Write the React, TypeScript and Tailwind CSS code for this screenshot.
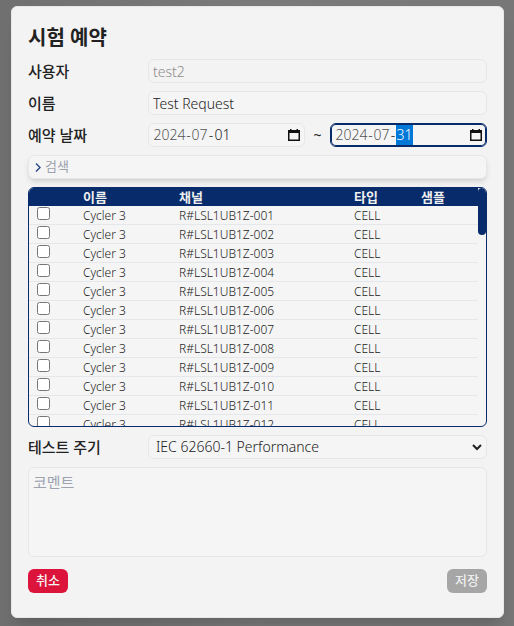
import { useEffect, useRef } from "react";

const channels = Array.from({ length: 12 }, (_, i) => ({
  name: "Cycler 3",
  channel: `R#LSL1UB1Z-${String(i + 1).padStart(3, "0")}`,
  type: "CELL",
  sample: "",
}));

const field = "h-6 min-w-0 rounded-md border border-[#e5e7eb] px-1 text-sm font-light";

function CalendarIcon() {
  return (
    <svg width="12" height="13" viewBox="0 0 12 13" aria-hidden="true">
      <path d="M0 1h12v11H0zM1.5 4v6.500h9V4z" fill="#111" fillRule="evenodd" />
      <path d="M2 0h1.5v2H2zM8.500 0H10v2H8.500z" fill="#111" />
    </svg>
  );
}

function DateField({ label, value, active = false }: { label: string; value: string; active?: boolean }) {
  const day = useRef<HTMLInputElement>(null);
  const [y, m, d] = value.split("-");

  useEffect(() => {
    if (active) {
      day.current?.focus({ preventScroll: true });
      day.current?.select();
    }
  }, [active]);

  const part =
    "h-5 bg-transparent p-0 text-center outline-none selection:bg-[#0078d7] selection:text-white focus:bg-[#0078d7] focus:text-white";

  return (
    <div
      role="group"
      aria-label={label}
      className={`${field} flex flex-1 items-center bg-[#f5f5f5] focus-within:border-[#082c6b] focus-within:ring-1 focus-within:ring-[#082c6b] focus-within:ring-inset`}
    >
      <input aria-label="년" defaultValue={y} className={`${part} w-[33px] text-[#555555]`} />
      <span className="w-[5px] text-center text-[#444444]">-</span>
      <input aria-label="월" defaultValue={m} className={`${part} w-[17px] text-[#555555]`} />
      <span className="w-[6px] text-center text-[#222222]">-</span>
      <input ref={day} aria-label="일" defaultValue={d} className={`${part} w-[17px] text-[#222222]`} />
      <button type="button" aria-label="달력 열기" className="ml-auto">
        <CalendarIcon />
      </button>
    </div>
  );
}

export default function App() {
  const label = "w-[120px] shrink-0 text-[15px] font-medium";
  const cell = "border-b border-[#e5e7eb] p-0";
  const textCell = `${cell} pt-[2px] leading-4`;
  return (
    <div className="min-h-screen bg-linear-to-r from-[#707070] via-[#7a7a7a] to-[#777777] pt-[6px] pr-[10px] pb-2 pl-[11px] font-['Noto_Sans','Noto_Sans_CJK_KR',sans-serif] text-[#222222]">
      <form
        role="dialog"
        aria-labelledby="title"
        className="flex flex-col gap-2 rounded-md border border-[#e5e7eb] bg-[#f3f3f3] px-4 pt-4 pb-6 shadow-xl"
      >
        <h1 id="title" className="pt-[2px] text-xl/[26px] font-semibold">시험 예약</h1>
        <div className="flex items-center">
          <label htmlFor="user" className={label}>사용자</label>
          <input id="user" disabled defaultValue="test2" className={`${field} flex-1 bg-[#f3f3f3] text-[#8c8c8c]`} />
        </div>
        <div className="flex items-center">
          <label htmlFor="name" className={label}>이름</label>
          <input id="name" defaultValue="Test Request" className={`${field} flex-1 bg-[#f5f5f5]`} />
        </div>
        <div className="flex items-center">
          <span className={label}>예약 날짜</span>
          <div className="flex flex-1 items-center">
            <DateField label="시작 날짜" value="2024-07-01" />
            <span className="w-[25px] text-center text-sm">~</span>
            <DateField label="종료 날짜" value="2024-07-31" active />
          </div>
        </div>

        <button
          type="button"
          className="flex h-6 items-center gap-1 rounded-md border border-[#e5e7eb] bg-[#f5f5f5] px-[6px] text-[13px] text-[#9ca3af] shadow-md"
        >
          <svg width="6" height="9" viewBox="0 0 6 9" fill="none" stroke="#29477f" strokeWidth="1.4" aria-hidden="true">
            <path d="M1 .5l4 4-4 4" />
          </svg>
          검색
        </button>

        <div className="flex h-60 overflow-hidden rounded-md border border-[#082c6b] bg-[#f5f5f5]">
          <div className="min-w-0 flex-1 overflow-hidden">
            <table className="w-full table-fixed border-separate border-spacing-0 text-left text-xs font-light">
              <colgroup>
                <col className="w-[54px]" />
                <col className="w-[96px]" />
                <col />
                <col className="w-[67px]" />
                <col className="w-[57px]" />
              </colgroup>
              <thead className="bg-[#082c6b] text-[13px] font-bold text-[#f0f0f0]">
                <tr className="h-[18px] leading-[18px]">
                  <th className="p-0" aria-label="선택" />
                  <th className="p-0">이름</th>
                  <th className="p-0">채널</th>
                  <th className="p-0">타입</th>
                  <th className="p-0">샘플</th>
                </tr>
              </thead>
              <tbody>
                {channels.map((c) => (
                  <tr key={c.channel} className="h-[19px]">
                    <td className={`${cell} pl-2`}>
                      <input type="checkbox" aria-label={c.channel} className="mb-[3px] block size-[13px]" />
                    </td>
                    <td className={textCell}>{c.name}</td>
                    <td className={textCell}>{c.channel}</td>
                    <td className={textCell}>{c.type}</td>
                    <td className={textCell}>{c.sample}</td>
                  </tr>
                ))}
              </tbody>
            </table>
          </div>
          <div className="w-2 shrink-0">
            <div className="h-[47px] rounded-sm bg-[#082c6b]" />
          </div>
        </div>

        <div className="flex items-center">
          <label htmlFor="cycle" className={label}>테스트 주기</label>
          <div className="relative flex flex-1">
            <select id="cycle" className={`${field} w-full appearance-none bg-[#f5f5f5] pr-6 pl-[7px]`}>
              <option>IEC 62660-1 Performance</option>
            </select>
            <svg
              className="pointer-events-none absolute top-[9px] right-[5px]"
              width="10"
              height="7"
              viewBox="0 0 10 7"
              fill="none"
              stroke="#222"
              strokeWidth="2"
              aria-hidden="true"
            >
              <path d="M1 1l4 4 4-4" />
            </svg>
          </div>
        </div>
        <textarea
          aria-label="코멘트"
          placeholder="코멘트"
          className="h-[90px] resize-none rounded-md border border-[#e5e7eb] bg-[#f5f5f5] px-1 py-[3px] text-[15px] placeholder:text-[#9ca3af]"
        />
        <div className="flex justify-between pt-1 text-[13px] font-medium">
          <button type="button" className="h-6 w-10 rounded-md bg-[#dc143c] text-[#f5f5f5]">취소</button>
          <button type="submit" disabled className="h-6 w-10 rounded-md bg-[#a6a6a6] text-[#eeeeee]">저장</button>
        </div>
      </form>
    </div>
  );
}
